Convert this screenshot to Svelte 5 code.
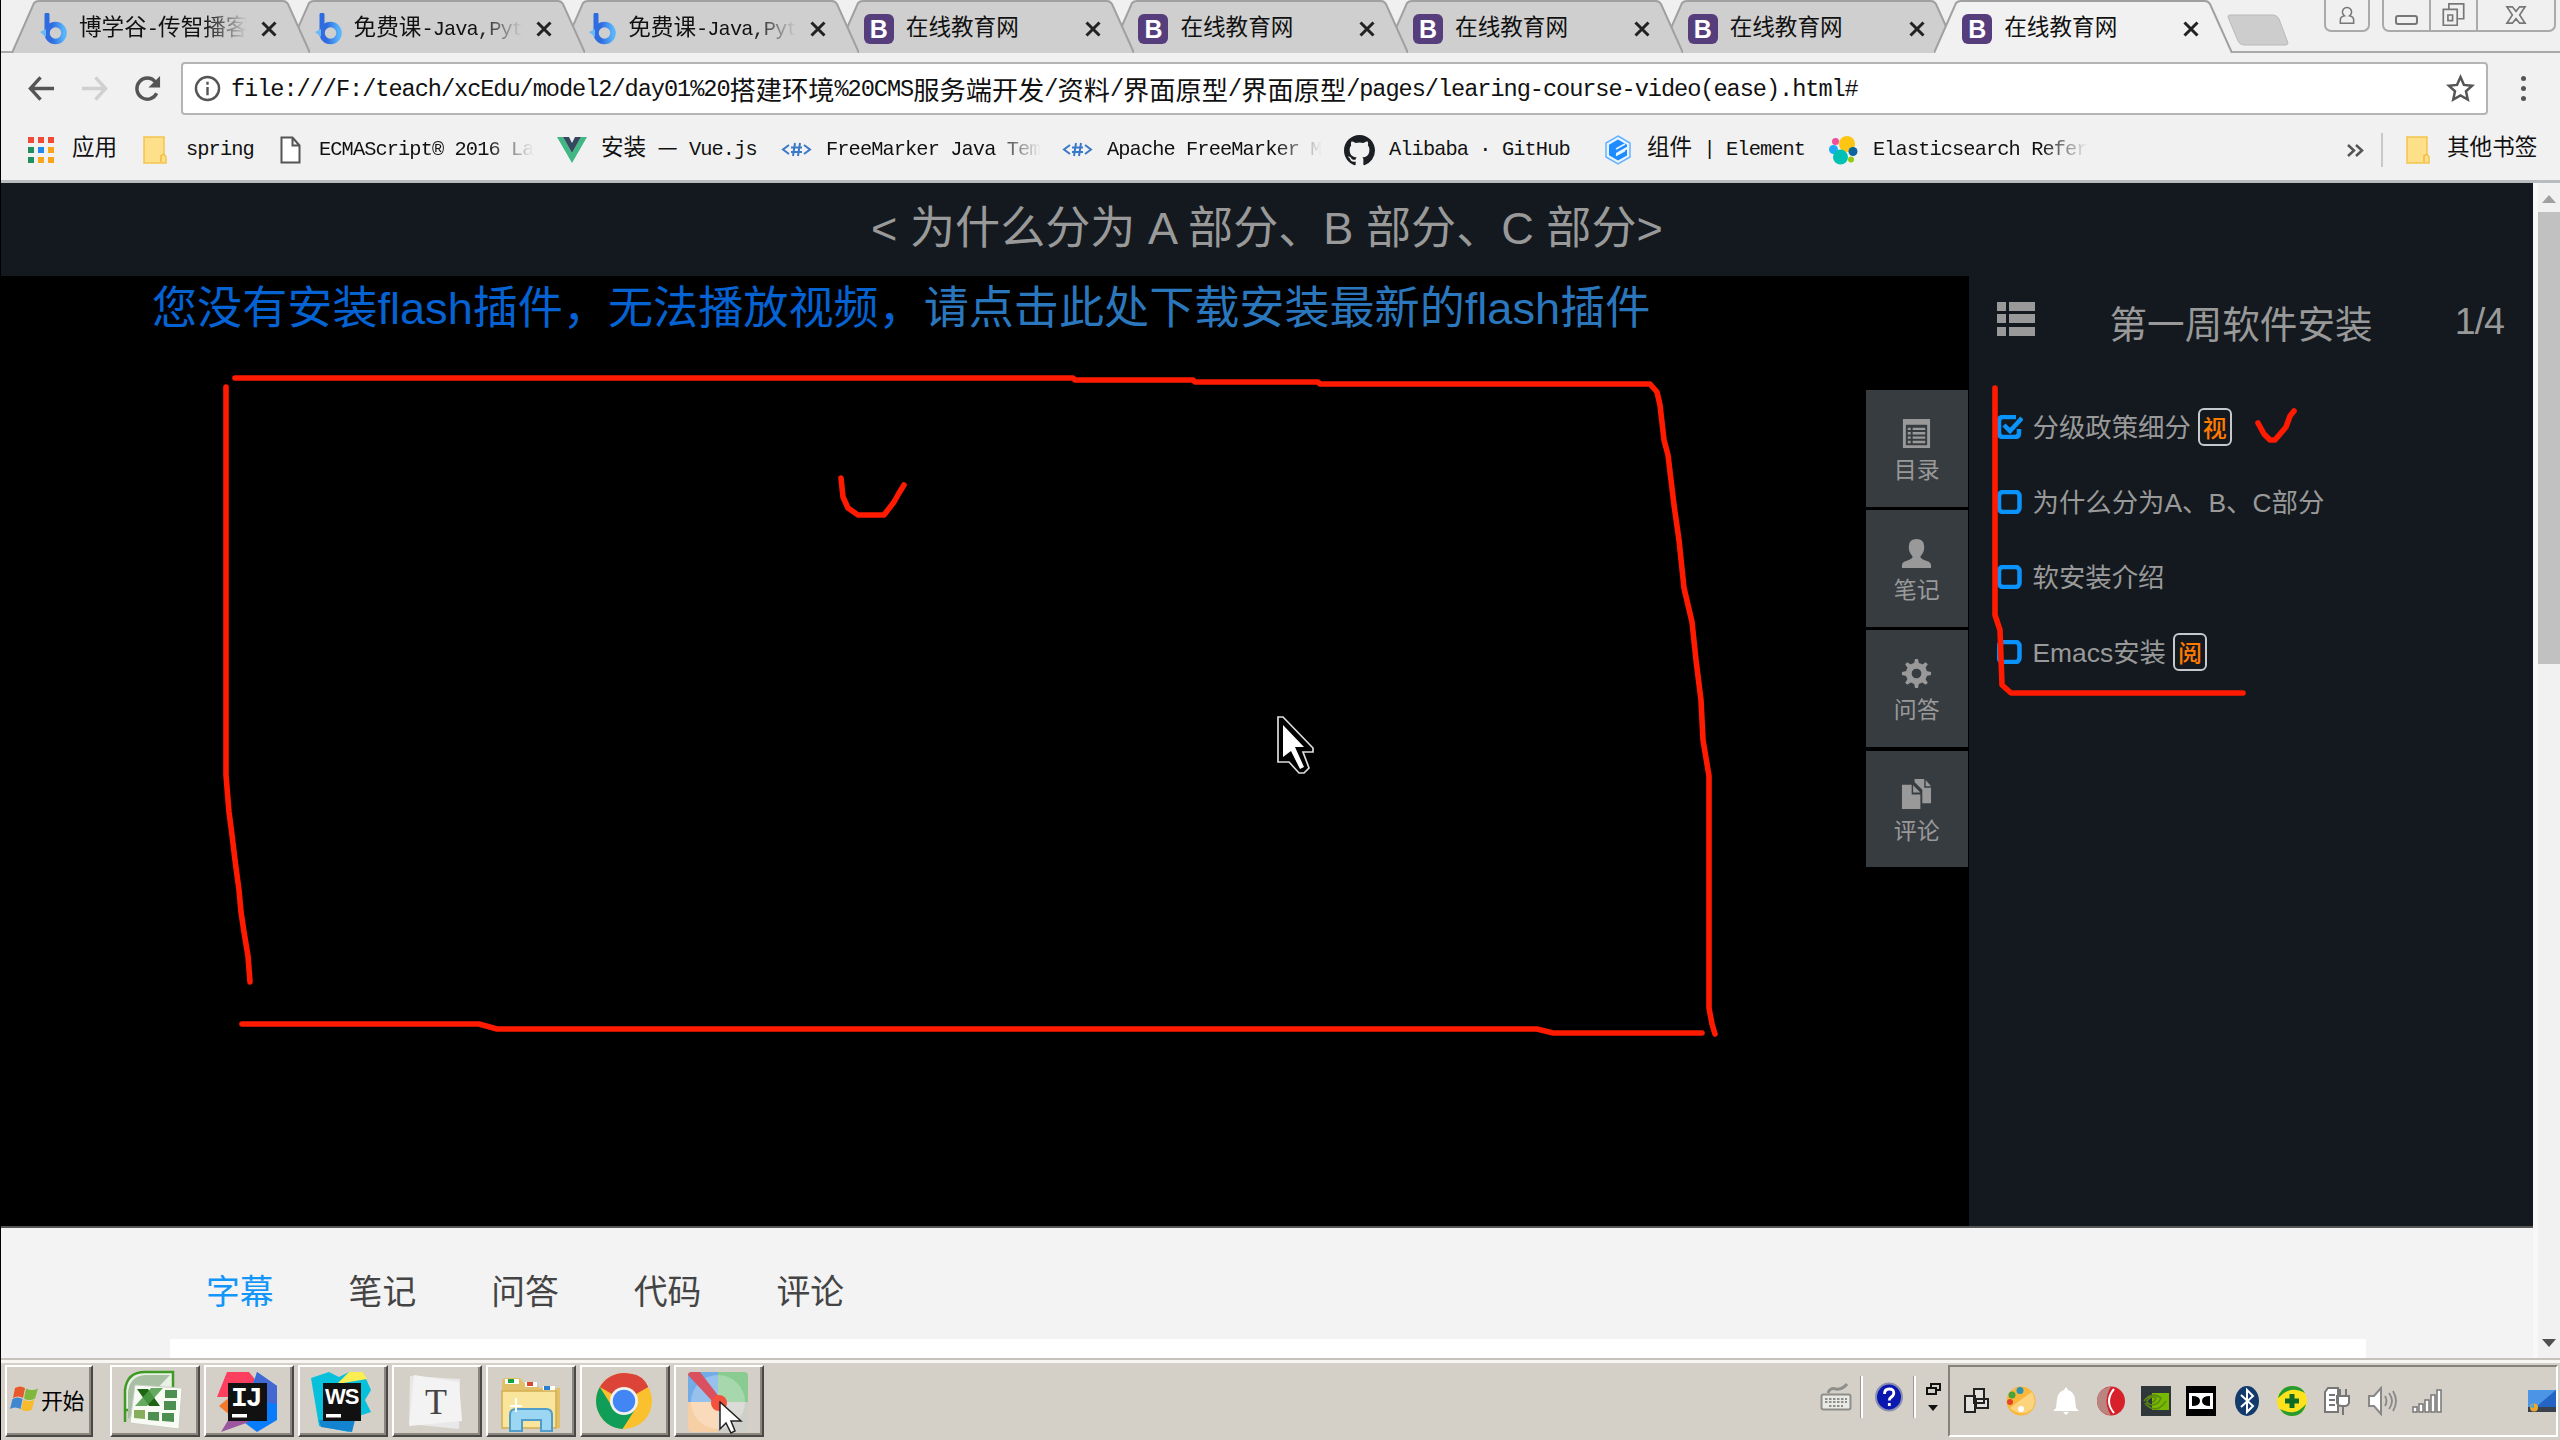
<script>
  const tabs = [
    { icon: 'b', title: '博学谷-传智播客', fade: true },
    { icon: 'b', title: '免费课-Java,Pyt', fade: true },
    { icon: 'b', title: '免费课-Java,Pyt', fade: true },
    { icon: 'B', title: '在线教育网' },
    { icon: 'B', title: '在线教育网' },
    { icon: 'B', title: '在线教育网' },
    { icon: 'B', title: '在线教育网' },
    { icon: 'B', title: '在线教育网', active: true }
  ];

  const bookmarks = [
    { icon: 'apps', title: '应用', width: 115, gap: 18 },
    { icon: 'folder', title: 'spring', width: 137, gap: 19 },
    { icon: 'file', title: 'ECMAScript® 2016 La', width: 277, gap: 18, fade: true },
    { icon: 'vue', title: '安装 — Vue.js', width: 224, gap: 14 },
    { icon: 'fm', title: 'FreeMarker Java Tem', width: 281, gap: 14, fade: true },
    { icon: 'fm', title: 'Apache FreeMarker M', width: 282, gap: 14, fade: true },
    { icon: 'github', title: 'Alibaba · GitHub', width: 259, gap: 14 },
    { icon: 'element', title: '组件 | Element', width: 226, gap: 14 },
    { icon: 'elastic', title: 'Elasticsearch Refer', width: 270, gap: 15, fade: true }
  ];

  const tools = [
    { icon: 'list', label: '目录' },
    { icon: 'user', label: '笔记' },
    { icon: 'gear', label: '问答' },
    { icon: 'copy', label: '评论' }
  ];

  const lessons = [
    { title: '分级政策细分', done: true, badge: '视' },
    { title: '为什么分为A、B、C部分' },
    { title: '软安装介绍' },
    { title: 'Emacs安装', badge: '阅' }
  ];

  const sections = ['字幕', '笔记', '问答', '代码', '评论'];
  const apps = ['excel', 'idea', 'webstorm', 'typora', 'explorer', 'chrome', 'recorder'];
  const gearTeeth = [0, 45, 90, 135, 180, 225, 270, 315];

  // Splits a string into Chinese and Latin runs, which use different faces.
  const runs = (s) =>
    (s.match(/[\u2014\u3000-\u9fff]+|[^\u2014\u3000-\u9fff]+/g) || []).map((t) => ({
      t,
      cjk: /[\u2014\u3000-\u9fff]/.test(t)
    }));
</script>

{#snippet mixed(s)}{#each runs(s) as r}<span class={r.cjk ? 'zh' : 'en'}>{r.t}</span>{/each}{/snippet}

<div class="screen">
  <header class="chrome">
    <div class="tabstrip">
      <div class="tabs">
        {#each tabs as tab, i}
          <div class="tab" class:active={tab.active} style="z-index:{tab.active ? 20 : 10 - i}">
            <svg class="tabshape" viewBox="0 0 298 53" preserveAspectRatio="none">
              <path d="M0 53 L22 3 Q24 1 27 1 H271 Q274 1 276 4 L298 53" />
            </svg>
            <div class="tabbody">
              {#if tab.icon === 'b'}
                <svg class="fav" viewBox="0 0 30 32">
                  <defs><linearGradient id="bx{i}" x1="0" y1="0" x2="1" y2="0"><stop offset=".3" stop-color="#2f6ce0" /><stop offset="1" stop-color="#58b4fb" /></linearGradient></defs>
                  <path d="M8 2V19" stroke="#2f6be0" stroke-width="5" stroke-linecap="round" />
                  <circle cx="16.500" cy="20" r="8.500" fill="none" stroke="url(#bx{i})" stroke-width="5.500" />
                  <path d="M1 19l6-3v8z" fill="#6ab8f7" />
                </svg>
              {:else}
                <span class="boot">B</span>
              {/if}
              <span class="tabtitle mono" class:clip={tab.fade}>{@render mixed(tab.title)}</span>
              <svg class="close" viewBox="0 0 16 16"><path d="M1.500 1.500l13 13M14.500 1.500l-13 13" /></svg>
            </div>
          </div>
        {/each}
      </div>
      <svg class="newtab" viewBox="0 0 66 34"><path d="M4 2H47Q51 2 53 6L62 30Q62 32 59 32H18Q14 32 12 28L2 4Q2 2 4 2Z" /></svg>
      <div class="winctl account">
        <svg viewBox="0 0 22 24"><path d="M3 22h16v-4q0-4-5-5a5.500 5.500 0 1 0-6 0q-5 1-5 5z" /></svg>
      </div>
      <div class="winctl group">
        <span class="cell min"><i></i></span>
        <span class="cell"><svg viewBox="0 0 26 28"><path d="M8 7V2h16v16h-6M2 8h15v17H2zM7 14h5v6H7z" /></svg></span>
        <span class="cell wide"><svg viewBox="0 0 24 22"><path d="M2 2h6l4 5 4-5h6l-6 9 6 9h-6l-4-5-4 5H2l6-9z" /></svg></span>
      </div>
    </div>

    <div class="toolbar">
      <svg class="nav" viewBox="0 0 28 28"><path d="M27 14H3M13 2.500L2.500 14 13 25.500" /></svg>
      <svg class="nav dim" viewBox="0 0 28 28"><path d="M1 14h24M15 2.500L25.500 14 15 25.500" /></svg>
      <svg class="nav" viewBox="0 0 28 28"><path d="M23.500 19A10.800 11 0 1 1 22 7" /><path class="solid" d="M27 1v12H15z" /></svg>
      <div class="omnibox">
        <svg class="info" viewBox="0 0 28 28"><circle cx="14" cy="14" r="12" /><path d="M14 12.500V21M14 7v3" /></svg>
        <span class="url mono">{@render mixed('file:///F:/teach/xcEdu/model2/day01%20搭建环境%20CMS服务端开发/资料/界面原型/界面原型/pages/learing-course-video(ease).html#')}</span>
        <svg class="star" viewBox="0 0 28 28"><path d="M14 3l3.300 7.500 8 .8-6 5.400 1.700 8L14 20.600 7 24.700l1.700-8-6-5.400 8-.8z" /></svg>
      </div>
      <div class="dots"><i></i><i></i><i></i></div>
    </div>

    <div class="bookmarks mono">
      {#each bookmarks as b}
        <div class="bm" style="width:{b.width}px;column-gap:{b.gap}px">
          {#if b.icon === 'apps'}
            <svg width="26" height="26" viewBox="0 0 26 26">
              <path fill="#ef4b37" d="M0 0h6v6H0zM10 0h6v6h-6zM20 0h6v6h-6z" /><path fill="#209060" d="M0 10h6v6H0zM0 20h6v6H0z" /><path fill="#2088f0" d="M10 10h6v6h-6z" /><path fill="#f8a51b" d="M20 10h6v6h-6zM10 20h6v6h-6zM20 20h6v6h-6z" />
            </svg>
          {:else if b.icon === 'folder'}
            <svg width="24" height="28" viewBox="0 0 24 28"><path d="M1 1h20v17l2 3v6H1z" fill="#ffe08a" stroke="#f3c34c" stroke-width="1.500" /><path d="M18 26v-6l3-2" fill="none" stroke="#f3b83c" stroke-width="1.500" /></svg>
          {:else if b.icon === 'file'}
            <svg width="21" height="28" viewBox="0 0 21 28"><path d="M1.500 1.500h11l7 8v17h-18zM12.500 1.500v8h7" fill="#fff" stroke="#555" stroke-width="2" /></svg>
          {:else if b.icon === 'vue'}
            <svg width="30" height="26" viewBox="0 0 30 26"><path d="M0 0h6l9 16L24 0h6L15 26z" fill="#41b883" /><path d="M6 0h6l3 6 3-6h6l-9 16z" fill="#35495e" /></svg>
          {:else if b.icon === 'fm'}
            <svg width="31" height="16" viewBox="0 0 31 16"><path d="M8 3L2 7.500 8 12M23 3l6 4.500L23 12M14 1l-2 13M19 1l-2 13M10 5.500h11M10 10h11" fill="none" stroke="#3a78c8" stroke-width="2" /></svg>
          {:else if b.icon === 'github'}
            <svg width="31" height="31" viewBox="0 0 16 16"><path fill="#1b1f23" d="M8 0C3.580 0 0 3.580 0 8c0 3.540 2.290 6.530 5.470 7.590.4.070.55-.17.55-.38 0-.19-.01-.82-.01-1.490-2.010.37-2.530-.49-2.690-.94-.09-.23-.48-.94-.82-1.130-.28-.15-.68-.52-.01-.53.63-.01 1.080.58 1.230.82.72 1.210 1.870.87 2.330.66.07-.52.28-.87.51-1.070-1.780-.2-3.640-.89-3.640-3.950 0-.87.31-1.590.82-2.150-.08-.2-.36-1.020.08-2.120 0 0 .67-.21 2.200.82.64-.18 1.320-.27 2-.27s1.360.09 2 .27c1.530-1.040 2.200-.82 2.200-.82.44 1.100.16 1.920.08 2.120.51.56.82 1.270.82 2.150 0 3.070-1.870 3.750-3.650 3.950.29.25.54.73.54 1.480 0 1.070-.01 1.930-.01 2.200 0 .21.15.46.55.38A8.010 8.010 0 0 0 16 8c0-4.420-3.580-8-8-8z" /></svg>
          {:else if b.icon === 'element'}
            <svg width="30" height="30" viewBox="0 0 30 30"><path d="M15 1l12 7v14l-12 7-12-7V8z" fill="#e8f4ff" stroke="#66b1ff" stroke-width="1.500" /><path d="M15 4.500l9 5.200v2L13 18v2.500l11-6v6L15 25.500l-9-5.200V9.700z" fill="#1e8cff" /><path d="M13 14l9-5M13 20.500l9-5" stroke="#e8f4ff" stroke-width="1.500" /></svg>
          {:else}
            <svg width="29" height="29" viewBox="0 0 29 29"><circle cx="18" cy="8" r="8" fill="#fec514" /><circle cx="6.500" cy="5.500" r="3.500" fill="#f04e98" /><circle cx="4.500" cy="13.500" r="4.500" fill="#1ba9f5" /><circle cx="24" cy="15.500" r="4.500" fill="#0b64a0" /><circle cx="11.500" cy="21" r="7.500" fill="#00bfb3" /><circle cx="22" cy="23.500" r="3" fill="#93c90e" /></svg>
          {/if}
          <span class:fade={b.fade}>{@render mixed(b.title)}</span>
        </div>
      {/each}
      <svg class="more" width="17" height="13" viewBox="0 0 17 13"><path d="M1 1l6 5.500L1 12M9 1l6 5.500L9 12" /></svg>
      <div class="bm other">
        <svg width="24" height="28" viewBox="0 0 24 28"><path d="M1 1h20v17l2 3v6H1z" fill="#ffe08a" stroke="#f3c34c" stroke-width="1.500" /><path d="M18 26v-6l3-2" fill="none" stroke="#f3b83c" stroke-width="1.500" /></svg>
        <span>{@render mixed('其他书签')}</span>
      </div>
    </div>
  </header>

  <div class="viewport">
    <div class="page">
      <h1 class="coursetitle"><span>&lt; 为什么分为 A 部分、B 部分、C 部分&gt;</span></h1>
      <div class="stage">
        <div class="video">
          <p class="flash"><span>您没有安装flash插件，无法播放视频，</span><a href="#top">请点击此处下载安装最新的flash插件</a></p>
          <nav class="tools">
            {#each tools as t}
              <div class="tool">
                <svg viewBox="0 0 32 32">
                  {#if t.icon === 'list'}
                    <path fill-rule="evenodd" d="M2 1h28v30H2zM5 7v21h22V7z" /><path d="M7 10h3v2.500H7zM12 10h13v2.500H12zM7 14.500h3V17H7zM12 14.500h13V17H12zM7 19h3v2.500H7zM12 19h13v2.500H12zM7 23.500h3V26H7zM12 23.500h13V26H12z" />
                  {:else if t.icon === 'user'}
                    <path d="M1 31v-3q0-3 5-4.500 6-2 6-4.500-4-4-4-10 0-8 8-8t8 8q0 6-4 10 0 2.500 6 4.500 5 1.500 5 4.500v3z" />
                  {:else if t.icon === 'gear'}
                    {#each gearTeeth as a}<path d="M13 8l1.500-7h3L19 8z" transform="rotate({a} 16 16)" />{/each}
                    <circle class="ring" cx="16" cy="16" r="8" />
                  {:else}
                    <path d="M14 0h10v9h7v16H22V11l-8-8zM25.500 1l5.500 6.500h-5.500z" /><path d="M1 6h10v10h9v15H1zM12.500 6.500L20 14h-7.500z" />
                  {/if}
                </svg>
                <span>{t.label}</span>
              </div>
            {/each}
          </nav>
        </div>
        <aside class="outline">
          <div class="outhead">
            <svg width="38" height="34" viewBox="0 0 38 34"><path d="M0 0h9v9H0zM12 0h26v9H12zM0 12h9v9H0zM12 12h26v9H12zM0 25h9v9H0zM12 25h26v9H12z" /></svg>
            <h2>第一周软件安装</h2>
            <span>1/4</span>
          </div>
          <ul>
            {#each lessons as l}
              <li>
                <svg width="26" height="24" viewBox="0 0 26 24">
                  {#if l.done}
                    <path d="M19 2H6Q2 2 2 6v12q0 4 4 4h12q4 0 4-4v-4" /><path d="M7 10l6 6L25 3" />
                  {:else}
                    <rect x="2" y="2" width="20.500" height="20" rx="4" />
                  {/if}
                </svg>
                <span class="lesson">{l.title}</span>
                {#if l.badge}<b>{l.badge}</b>{/if}
              </li>
            {/each}
          </ul>
        </aside>
      </div>
      <div class="below">
        <nav class="sections">
          {#each sections as s, i}<span class:current={i === 0}>{s}</span>{/each}
        </nav>
        <div class="sheet"></div>
      </div>
    </div>
    <div class="scrollbar">
      <svg viewBox="0 0 20 12"><path d="M10 2l7 8H3z" fill="#a0a0a0" /></svg>
      <div class="thumb"></div>
      <svg class="down" viewBox="0 0 20 12"><path d="M10 10l7-8H3z" fill="#505050" /></svg>
    </div>
  </div>

  <footer class="taskbar">
    <div class="btn start">
      <svg width="30" height="28" viewBox="0 0 30 28">
        <path d="M5 3q5-3 10 0l-2 10Q8 10 3 13z" fill="#e8582a" /><path d="M16 3.500q6 3 12 0l-3 10q-6 3-11 0z" fill="#7fb83c" /><path d="M2.500 14q5-3 10 0l-2 10Q5 21 0 24z" fill="#3f87d0" /><path d="M13.500 14.500q6 3 11 0l-2.500 10q-6 3-11 0z" fill="#f7bb2c" />
      </svg>
      <span>开始</span>
    </div>
    <div class="apps">
      {#each apps as a}
        <div class="btn app">
          <svg width="62" height="62" viewBox="0 0 62 62">
            {#if a === 'excel'}
              <path d="M2 52V20Q4 2 22 2H50V40H2z" fill="#e9f0e6" stroke="#3f9a25" stroke-width="2.500" /><path d="M5 49V22Q7 6 22 5H47z" fill="#a9bfa3" />
              <path d="M12 15l47 3-3 41-49-6z" fill="#f8faf4" stroke="#c9cfc2" />
              <path d="M42 20h12v8H42zM41 31h12v9H41zM39 43h12v9l-12-1zM25 42h11v9l-11-1z" fill="#4d8f50" /><path d="M11 40h11v9l-11-1z" fill="#86ae5c" />
              <path d="M14 19h11l12 17H26z" fill="#1f6412" /><path d="M28 18h12L24 36H12z" fill="#4b9b45" opacity=".85" />
            {:else if a === 'idea'}
              <path d="M10 2h22l10 12-8 13H0z" fill="#fc3f5f" /><path d="M40 2l20 14v34L40 62 24 50z" fill="#087cfa" /><path d="M40 2l20 14v18L36 30z" fill="#4468d2" /><path d="M2 36l12-10v20z" fill="#f3792b" /><path d="M10 36l6 6-12 20 28-10z" fill="#9a57a0" />
              <rect x="11" y="13" width="39" height="38" fill="#111" /><text x="14" y="36" class="ij">IJ</text><rect x="15" y="44" width="15" height="3.500" fill="#fff" />
            {:else if a === 'webstorm'}
              <path d="M0 8l18-6 10 5 10-5h14l8 18-6 10 6 12-18 6-4 14-30-6z" fill="#07c0dc" /><path d="M8 50h36l-3 12-31-5z" fill="#1383cf" /><path d="M38 2h14l4 7-30 5z" fill="#fcee52" />
              <rect x="12" y="13" width="38" height="38" fill="#111" /><text x="14" y="34" class="ws">WS</text><rect x="15" y="44" width="15" height="3.500" fill="#fff" />
            {:else if a === 'typora'}
              <path d="M5 6l50 3-1 50-50-5z" fill="#e8e8e8" /><path d="M9 5l45 7 3 39-53 5z" fill="#f3f3f3" /><text x="31" y="44" class="ty">T</text>
            {:else if a === 'explorer'}
              <path d="M3 12q0-4 4-4h14l4 5h12l3 5h21v40H3z" fill="#e2c069" /><path d="M6 9h14v5H6zM26 12h12v5H26zM44 16h12v5H44z" fill="#fff" /><path d="M9 9h6v4H9z" fill="#14a33a" /><path d="M28 12h6v4h-6z" fill="#d9482b" /><path d="M45 16h6v4h-6z" fill="#2a7fd2" /><path d="M3 21h54v37H3z" fill="#f9e59b" stroke="#d4ad50" stroke-width="1.500" />
              <path d="M11 61V45q0-6 6-6h30q6 0 6 6v16H42V50H23v11z" fill="#9bd7f3" stroke="#509ccb" stroke-width="2" /><path d="M17 28v14M11 36h12" stroke="#fff" stroke-width="2" />
            {:else if a === 'chrome'}
              <circle cx="31" cy="31" r="28" fill="#fbc02d" /><path d="M31 31L6.800 17a28 28 0 0 1 48.400 0z" fill="#db4437" /><path d="M6.800 17a28 28 0 0 0 22.700 42L43 38 20 38z" fill="#0f9d58" /><path d="M31 17H55.200Q50 5 38 3.800z" fill="#db4437" /><circle cx="31" cy="31" r="14" fill="#f1f1f1" /><circle cx="31" cy="31" r="11.200" fill="#4285f4" />
            {:else}
              <path d="M5 2h26v30H1V6q0-4 4-4z" fill="#72ace6" /><path d="M31 2h26q4 0 4 4v26H31z" fill="#8acb92" /><path d="M1 32h30v30H5q-4 0-4-4z" fill="#f7cfa5" /><path d="M31 32h30v26q0 4-4 4H31z" fill="#cfcfca" /><circle cx="31" cy="32" r="27" fill="#fff" opacity=".25" /><path d="M1 5q0-3 4-3h8l20 26-6 5z" fill="#d9515f" /><circle cx="32" cy="33" r="8" fill="#f4503c" />
            {/if}
          </svg>
        </div>
      {/each}
    </div>

    <div class="quick">
      <svg width="32" height="30" viewBox="0 0 32 30"><rect x="1.500" y="12.500" width="29" height="15" rx="2" fill="#e9e9e6" stroke="#8e8e8a" stroke-width="2" /><path d="M5 17h22M5 20h22M9 24h14" stroke="#8e8e8a" stroke-width="2" stroke-dasharray="2.500 1.500" /><path d="M8 11q2-6 8-4 6 1 11-5" fill="none" stroke="#8e8e8a" stroke-width="3" /></svg>
      <i class="sep"></i>
      <svg width="28" height="30" viewBox="0 0 28 30"><ellipse cx="14" cy="15" rx="13" ry="13.500" fill="#0b18b0" stroke="#8a8fb0" stroke-width="2" /><path d="M9.500 12q0-5 4.700-5t4.600 4q0 2.500-3 4.500-1.500 1-1.500 3M14.300 21v3" fill="none" stroke="#fff" stroke-width="2.800" /></svg>
      <i class="sep"></i>
      <svg class="tiny" width="17" height="30" viewBox="0 0 17 30"><path d="M6 6V2h9v6h-4M2 6h9v6H2z" fill="none" stroke="#111" stroke-width="2" /><path d="M3 23h10l-5 6z" fill="#111" /></svg>
    </div>
    <div class="tray">
      <svg viewBox="0 0 30 30"><path d="M13 3h10v14H13zM4 10h10v16H4zM15 13h12v9H15z" fill="#e3e1dc" stroke="#222" stroke-width="2" /></svg>
      <svg viewBox="0 0 30 30"><ellipse cx="15" cy="15" rx="14.500" ry="14.500" fill="#f9b73c" /><path d="M4 22q10-8 22-16 5 10 0 17-10 9-22-1" fill="#fcd47e" /><circle cx="14" cy="4.500" r="3.500" fill="#2a93b8" /><circle cx="6" cy="9" r="3.500" fill="#48a43a" /><circle cx="4" cy="16" r="3" fill="#e2472a" /><circle cx="15" cy="23" r="3" fill="#fff" /></svg>
      <svg viewBox="0 0 30 30"><path d="M15 1l2 3q6 2 7 9l1 9 3 3H2l3-3 1-9q1-7 7-9zM12 26h6l-3 3z" fill="#fff" /></svg>
      <svg viewBox="0 0 30 30"><ellipse cx="15" cy="15" rx="14" ry="14.500" fill="#d8202a" /><path d="M15 .5Q1 3 1 15t14 14.500Q6 15 15 .5z" fill="#b98580" /><path d="M18 3q-10 12 0 24" stroke="#fff" stroke-width="2" fill="none" /></svg>
      <svg viewBox="0 0 30 30"><path d="M0 0h30v30H0z" fill="#30373b" /><path d="M11 7h17v17H11z" fill="#76b900" /><path d="M3 15q8-10 17-3-3 7-9 7-5-1-5-4 4-6 9-3-1 4-4 4M4 17q6 8 14 5 5-3 7-7" fill="none" stroke="#5c8a10" stroke-width="1.600" /></svg>
      <svg viewBox="0 0 30 30"><path d="M0 0h30v30H0z" fill="#000" /><path d="M3 7h24v16H3z" fill="#fff" /><path d="M6 10q8 0 8 5t-8 5zM24 10q-8 0-8 5t8 5z" fill="#000" /></svg>
      <svg viewBox="0 0 30 30"><ellipse cx="15" cy="15" rx="12" ry="15" fill="#123a6b" /><path d="M9 9l12 11-6 6V4l6 6L9 21" fill="none" stroke="#fff" stroke-width="2" /></svg>
      <svg viewBox="0 0 30 30"><ellipse cx="15" cy="15" rx="15" ry="15" fill="#ffe11c" /><path d="M1 12Q4 0 16 0q8 0 12 7-8-4-14-3T1 12zM29 18q-3 12-14 12-8 0-12-7 8 4 14 3t12-8z" fill="#289a34" /><path d="M15 8v14M8 15h14" stroke="#0f6a25" stroke-width="5" /></svg>
      <svg viewBox="0 0 30 30"><path d="M6 2h10v24H3V6zM15 10h12v7q-1 3-4 3h-3q-4 0-5-3zM18 3v7M24 3v7M21 20v9" fill="#fff" stroke="#777" stroke-width="2" /><path d="M7 9h6M7 14h6M7 19h6" stroke="#777" stroke-width="2" /></svg>
      <svg viewBox="0 0 30 30"><path d="M2 10h5l7-8v26l-7-8H2z" fill="#fff" stroke="#888" stroke-width="2" /><path d="M18 10q3 5 0 10M22 7q6 8 0 16M26 5q6 10 0 20" fill="none" stroke="#888" stroke-width="1.800" /></svg>
      <svg viewBox="0 0 30 30"><path d="M1 21h4v5H1zM7 18h4v8H7zM13 14h4v12h-4zM19 9h4v17h-4zM25 4h4v22h-4z" fill="#fff" stroke="#777" stroke-width="1.500" /></svg>
      <svg class="desk" viewBox="0 0 28 24"><path d="M0 1h28v17H0z" fill="#2465c4" /><path d="M0 1h28L8 18H0z" fill="#4c94e6" /><path d="M0 18h28v5H0z" fill="#39414c" /><circle cx="6" cy="18.500" r="4" fill="#f0a62c" /><path d="M2 18l4-4v5z" fill="#3ba7dc" /></svg>
    </div>
  </footer>

  <!-- Freehand pen marks drawn over the page -->
  <svg class="ink" viewBox="0 0 2560 1440">
    <path d="M235 378H1073L1075 380H1193L1195 382H1318L1320 384H1650L1657 392L1660 405L1664 440L1668 455L1674 505L1679 540L1684 588L1692 622L1696 660L1701 700L1703 740L1709 776V1008L1712 1024L1715 1034" />
    <path d="M226 387V775L229 812L232 835L235 860L239 890L241 912L244 932L248 956L250 982" />
    <path d="M242 1024H479L497 1029H1537L1553 1033H1702" />
    <path d="M841 478L843 497L848 508L858 515H884L894 502L899 493L904 485" />
    <path d="M1995 388V615L2000 630L2002 685L2011 693H2243" />
    <path d="M2258 423L2264 434L2270 440H2275L2286 427L2290 416L2294 411" />
  </svg>
  <svg class="cursor main" viewBox="0 0 38 60">
    <path d="M1 1H6L36 32V36H26L32 52L27 57H22L12 46L5 46H1Z" fill="#000" stroke="#ddd" stroke-width="1.700" />
    <path d="M6 9L27 31H18L27 51L23 53L14 35L6 41Z" fill="#fff" />
  </svg>
  <svg class="cursor second" viewBox="0 0 26 34">
    <path d="M2 1V28L8 22L13 32L17 30L13 20H23Z" fill="#fff" stroke="#222" stroke-width="1.500" />
  </svg>
</div>

<style>
  :global(body) { background: #000; overflow: hidden; }
  * { box-sizing: border-box; }
  h1, h2, p, ul { margin: 0; padding: 0; font-weight: 400; }
  svg { display: block; flex: none; }

  .screen {
    position: relative;
    width: 2560px;
    height: 1440px;
    overflow: hidden;
    display: flex;
    flex-direction: column;
    border-left: 1px solid #000;
    font-family: "Liberation Sans", "Noto Sans CJK SC", sans-serif;
  }

  .mono { --px: 22.600px; white-space: nowrap; color: #111; }
  .zh { font-family: "Noto Sans CJK SC", sans-serif; font-size: var(--px); line-height: 1; }
  .en { font-family: "Liberation Mono", monospace; font-size: calc(var(--px) * 0.9); letter-spacing: calc(var(--px) * -0.04); line-height: 1; white-space: pre; }
  .fade { mask-image: linear-gradient(90deg, #000 78%, transparent 100%); }
  .clip { mask-image: linear-gradient(90deg, #000 125px, transparent 168px); }

  /* Browser frame */
  .chrome { height: 183px; flex: none; background: #f1f1f1; border-bottom: 3px solid #b9bdc0; display: flex; flex-direction: column; }
  .tabstrip { height: 53px; display: flex; align-items: flex-start; background: #f0f0f0; border-bottom: 2px solid #a9a9a9; padding-left: 11px; }
  .tabs { display: flex; height: 53px; }
  .tab { position: relative; width: 298px; margin-right: -23.400px; height: 53px; flex: none; display: grid; }
  .tabshape, .tabbody { grid-area: 1 / 1; }
  .tabshape { width: 298px; height: 53px; }
  .tabshape path { fill: #cfcfcf; stroke: #a0a0a0; stroke-width: 2; }
  .active .tabshape path { fill: #f1f1f1; }
  .tabbody { display: flex; align-items: center; padding: 5px 33px 0 27px; height: 53px; }
  .fav { width: 30px; height: 32px; margin-right: 10px; }
  .boot { width: 30px; height: 30px; border-radius: 6px; background: #563d7c; color: #fff; font: bold 25px/30px "Liberation Sans", sans-serif; text-align: center; margin: 0 12px 0 1px; flex: none; }
  .tabtitle { line-height: 34px; padding-top: 1px; }
  .close { width: 16px; height: 16px; margin-left: auto; fill: none; stroke: #222; stroke-width: 3; }
  .clip + .close { margin-left: auto; }
  .newtab { width: 66px; height: 34px; margin: 13px 0 0 17px; fill: #cdcdcd; stroke: #b9b9b9; }
  .winctl { height: 32px; border: 2px solid #aaa; border-top: 0; border-radius: 0 0 7px 7px; display: flex; align-items: center; }
  .winctl svg { fill: none; stroke: #777; stroke-width: 1.800; }
  .account { width: 46px; justify-content: center; margin-left: 32px; }
  .account svg { width: 20px; height: 20px; }
  .group { width: 174px; margin-left: 12px; }
  .cell { width: 47px; height: 30px; display: grid; place-items: center; border-right: 2px solid #aaa; }
  .cell svg { width: 25px; height: 26px; }
  .cell.wide { width: 76px; border: 0; }
  .cell.wide svg { width: 22px; height: 20px; }
  .cell.min i { width: 23px; height: 10px; border: 2px solid #777; border-radius: 3px; margin-top: 9px; }

  .toolbar { height: 70px; display: flex; align-items: center; padding-left: 27px; }
  .nav { width: 27px; height: 27px; margin-right: 26px; fill: none; stroke: #555; stroke-width: 3.500; }
  .nav.dim { stroke: #d0d0d0; }
  .nav .solid { fill: #555; stroke: none; }
  .omnibox { width: 2307px; height: 53px; margin-left: -6px; border: 2px solid #b4b4b4; border-radius: 4px; background: #fff; display: flex; align-items: center; padding: 0 11px; }
  .info { width: 27px; height: 27px; fill: none; stroke: #555; stroke-width: 2.500; }
  .url { --px: 26.240px; margin-left: 10px; padding-top: 3px; display: flex; align-items: center; }
  .star { width: 29px; height: 29px; margin-left: auto; fill: none; stroke: #555; stroke-width: 2.400; }
  .dots { display: flex; flex-direction: column; gap: 5px; margin-left: 33px; }
  .dots i { width: 5px; height: 5px; border-radius: 50%; background: #555; }

  .bookmarks { height: 57px; display: flex; align-items: center; padding-left: 27px; padding-bottom: 5px; padding-top: 2px; }
  .bm { display: flex; align-items: center; flex: none; line-height: 34px; }
  .more { margin-left: 248px; fill: none; stroke: #555; stroke-width: 2.500; }
  .other { border-left: 2px solid #c8c8c8; margin-left: 17px; padding-left: 23px; column-gap: 17px; }

  /* Web page */
  .viewport { height: 1175px; flex: none; display: flex; }
  .page { width: 2532px; display: flex; flex-direction: column; }
  .coursetitle { height: 93px; background: #14191f; color: #999; font-size: 45.100px; line-height: 91px; text-align: center; white-space: nowrap; }
  .stage { height: 952px; display: flex; border-bottom: 2px solid #555; }
  .video { width: 1968px; background: #000; display: flex; flex-direction: column; }
  .flash { height: 114px; padding-left: 151px; font-size: 45.100px; line-height: 66px; color: #0562d2; white-space: nowrap; }
  .flash a { color: #2a77bd; text-decoration: none; }
  .tools { align-self: flex-end; display: flex; flex-direction: column; gap: 3.500px; padding-right: 1.500px; }
  .tool { width: 101.500px; height: 116.700px; background: #373c41; color: #999; display: flex; flex-direction: column; align-items: center; padding-top: 28px; font-size: 23px; line-height: 32px; gap: 5px; }
  .tool svg { width: 31px; height: 31px; fill: #999; }
  .tool .ring { fill: none; stroke: #999; stroke-width: 6; }
  .outline { flex: 1; background: #14191f; color: #999; padding: 0 29px 0 27.500px; }
  .outhead { height: 90px; display: flex; align-items: center; font-size: 37.600px; white-space: nowrap; }
  .outhead svg { fill: #999; margin-bottom: 4px; }
  .outhead h2 { font-size: inherit; margin-left: 75px; }
  .outhead span { margin-left: auto; letter-spacing: -1px; }
  .outline ul { list-style: none; padding-top: 23px; }
  .outline li { height: 75px; display: flex; align-items: center; font-size: 26.400px; white-space: nowrap; }
  .outline li svg { fill: none; stroke: #0a94fb; stroke-width: 4.500; }
  .lesson { margin-left: 10px; padding-bottom: 3px; }
  .outline b { width: 34px; height: 38px; margin-left: 7px; border: 2px solid #c4c8cc; border-radius: 6px; color: #ff7a00; font: 500 24px/34px "Noto Sans CJK SC", sans-serif; text-align: center; }

  .below { flex: 1; background: #f3f3f3; display: flex; flex-direction: column; }
  .sections { height: 111px; padding: 17px 0 0 205px; display: flex; gap: 75px; font-size: 33.800px; line-height: 94px; color: #444; }
  .sections .current { color: #1296fa; }
  .sheet { flex: 1; background: #fff; margin: 0 167px 0 169px; }

  .scrollbar { flex: 1; border-left: 5px solid #f8f8f8; background: #f1f1f1; display: flex; flex-direction: column; }
  .scrollbar svg { width: 20px; height: 12px; margin: 10px 1px 7px; }
  .thumb { height: 452px; background: #c1c1c1; }
  .scrollbar svg.down { margin: auto 1px 9px; }

  /* Taskbar */
  .taskbar { height: 82px; flex: none; background: #d4d0c8; display: flex; align-items: flex-start; border-top: 2px solid #c5c2bb; box-shadow: inset 0 3px #f7f6f3; padding: 5px 2px 0 4px; }
  .btn { height: 72px; border: 2px solid; border-color: #fff #4a4845 #4a4845 #fff; box-shadow: inset -2px -2px #8a8680; display: flex; align-items: center; justify-content: center; background: #d4d0c8; }
  .start { width: 88px; font: 22px/1.400 "Noto Sans CJK SC", sans-serif; color: #000; padding: 0 4px 4px 0; }
  .start span { margin-left: 1px; white-space: nowrap; letter-spacing: -0.500px; }
  .apps { display: flex; gap: 4px; margin-left: 17px; }
  .app { width: 90px; padding-right: 2px; }
  .ij { font: bold 28px "Liberation Mono", monospace; fill: #fff; letter-spacing: -2px; }
  .ws { font: bold 22px "Liberation Sans", sans-serif; fill: #fff; letter-spacing: -1px; }
  .ty { font: 36px "Liberation Serif", serif; fill: #444; text-anchor: middle; }
  .quick { display: flex; align-items: center; height: 64px; margin-left: auto; }
  .sep { width: 3px; height: 42px; background: #fff; border-left: 1px solid #999; margin: 0 12px 0 8px; }
  .quick .sep ~ .sep { margin: 0 9px 0 10px; }
  .tiny { margin-right: 6px; }
  .tray { width: 610px; height: 72px; border: 2px solid; border-color: #85827c #fff #fff #85827c; display: flex; align-items: center; gap: 15.100px; padding-left: 11px; }
  .tray svg { width: 30px; height: 30px; }
  .tray .desk { width: 28px; height: 24px; margin-left: auto; }

  /* Overlays */
  .ink { position: absolute; left: -1px; top: 0; width: 2560px; height: 1440px; fill: none; stroke: #ff1a00; stroke-width: 5.600; stroke-linecap: round; stroke-linejoin: round; pointer-events: none; }
  .cursor { position: absolute; }
  .main { left: 1276px; top: 716px; width: 38px; height: 60px; }
  .second { left: 717px; top: 1401px; width: 26px; height: 34px; }
</style>
